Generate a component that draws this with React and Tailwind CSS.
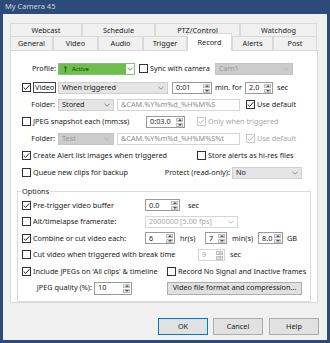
import clsx from "clsx";

function Box({ checked, disabled }) {
  return (
    <span
      className={clsx(
        "w-[9px] h-[9px] border bg-white flex items-center justify-center shrink-0",
        disabled ? "border-[#c8c8c8]" : "border-[#333333]"
      )}
    >
      {checked && (
        <svg width="7" height="7" viewBox="0 0 7 7">
          <path d="M0.7 3.5 L2.6 5.4 L6.3 1.3" fill="none" stroke={disabled ? "#b4b4b4" : "#222"} strokeWidth="1" />
        </svg>
      )}
    </span>
  );
}

function Check({ checked, disabled, label, focus, className }) {
  return (
    <div className={clsx("flex items-center", className)}>
      <Box checked={checked} disabled={disabled} />
      <span
        className={clsx(
          "ml-[2px] whitespace-nowrap",
          disabled ? "text-[#a8a8a8]" : "text-[#1a1a1a]",
          focus && "border border-[#444] px-[1px] py-[1px]"
        )}
      >
        {label}
      </span>
    </div>
  );
}

function Arrow({ light }) {
  return (
    <svg width="6" height="4" viewBox="0 0 6 4" className="shrink-0">
      <path d="M0.5 0.8 L3 3.2 L5.5 0.8" fill="none" stroke={light ? "#b0b0b0" : "#808080"} strokeWidth="0.9" />
    </svg>
  );
}

function Select({ className, value, variant }) {
  return (
    <div
      className={clsx(
        "h-[12px] flex items-center border pl-[3px] pr-[3px] whitespace-nowrap overflow-hidden",
        variant === "gray" && "bg-[#e5e5e5] border-[#cfcfcf] text-[#1a1a1a]",
        variant === "dis" && "bg-[#cccccc] border-[#c4c4c4] text-[#9a9a9a]",
        variant === "light" && "bg-white border-[#d6d6d6] text-[#a8a8a8]",
        className
      )}
    >
      <span className="flex-1">{value}</span>
      <Arrow light={variant !== "gray"} />
    </div>
  );
}

function Spin({ className, value, disabled }) {
  return (
    <div
      className={clsx(
        "h-[12px] flex border bg-white",
        disabled ? "border-[#d4d4d4] text-[#a8a8a8]" : "border-[#9a9a9a] text-[#1a1a1a]",
        className
      )}
    >
      <div className="flex-1 pl-[3px] flex items-center">{value}</div>
      <div className="w-[8px] flex flex-col gap-[1px] p-[1px] pl-0">
        <div className="flex-1 bg-[#e8e8e8] border border-[#c0c0c0] flex items-center justify-center">
          <svg width="4" height="2" viewBox="0 0 4 2"><path d="M0 2 L2 0 L4 2 Z" fill={disabled ? "#c0c0c0" : "#555"} /></svg>
        </div>
        <div className="flex-1 bg-[#e8e8e8] border border-[#c0c0c0] flex items-center justify-center">
          <svg width="4" height="2" viewBox="0 0 4 2"><path d="M0 0 L2 2 L4 0 Z" fill={disabled ? "#c0c0c0" : "#555"} /></svg>
        </div>
      </div>
    </div>
  );
}

function Text({ className, value }) {
  return (
    <div className={clsx("h-[12px] flex items-center border border-[#d4d4d4] bg-white pl-[3px] text-[#8c8c8c] whitespace-nowrap overflow-hidden", className)}>
      {value}
    </div>
  );
}

function Tab({ label, className, active }) {
  return (
    <div
      className={clsx(
        "flex items-center justify-center border-t border-l border-r border-[#d9d9d9] shrink-0",
        active ? "bg-white h-[18px] -mt-[3px] relative z-10 -mb-[1px]" : "bg-[#f0f0f0] h-[14px]",
        className
      )}
    >
      {label}
    </div>
  );
}

export default function App() {
  return (
    <div className="w-[330px] h-[343px] bg-[#2d4b78] flex flex-col text-[7.3px] leading-none text-[#1a1a1a] font-['Noto_Sans','DejaVu_Sans',sans-serif]">
      <div className="h-[14px] flex items-center pl-[5px] text-[#c9d3e2] text-[7.5px]">My Camera 45</div>
      <div className="flex-1 mx-[3px] mb-[3px] bg-[#f0f0f0] pl-[7px] pt-[9px] flex flex-col">
        <div className="flex h-[13px]">
          <Tab label="Webcast" className="w-[72px] h-[13px]" />
          <Tab label="Schedule" className="w-[73px] h-[13px]" />
          <Tab label="PTZ/Control" className="w-[85px] h-[13px]" />
          <Tab label="Watchdog" className="w-[77px] h-[13px]" />
        </div>
        <div className="flex h-[14px] items-end">
          <Tab label="General" className="w-[43px]" />
          <Tab label="Video" className="w-[45px]" />
          <Tab label="Audio" className="w-[45px]" />
          <Tab label="Trigger" className="w-[44px]" />
          <Tab label="Record" className="w-[45px]" active />
          <Tab label="Alerts" className="w-[41px]" />
          <Tab label="Post" className="w-[44px]" />
        </div>

        <div className="w-[308px] h-[253px] bg-white border border-[#d9d9d9] pt-[9px] flex flex-col">
          {/* profile */}
          <div className="h-[17px] flex items-center">
            <span className="w-[45px] text-right">Profile:</span>
            <div className="ml-[2px] w-[77px] h-[12px] flex border border-[#8fb98a] bg-white">
              <div className="w-[67px] bg-[#6cc04a] flex items-center pl-[4px] gap-[4px]">
                <svg width="5" height="8" viewBox="0 0 5 8"><path d="M2.5 0.5 L4.5 3 L3.2 3 L3.2 7.5 L1.8 7.5 L1.8 3 L0.5 3 Z" fill="#2f7d1f" /></svg>
                <span className="text-[6px] text-[#153d0c]">Active</span>
              </div>
              <div className="flex-1 flex items-center justify-center"><Arrow /></div>
            </div>
            <Check label="Sync with camera" className="ml-[4px] w-[76px]" />
            <Select variant="dis" value="Cam1" className="w-[78px]" />
          </div>
          {/* video */}
          <div className="h-[17px] flex items-center mt-[2px]">
            <Check checked focus label="Video" className="ml-[11px] w-[36px]" />
            <Select variant="gray" value="When triggered" className="w-[110px]" />
            <Spin value="0:01" className="ml-[4px] w-[40px]" />
            <span className="ml-[3px] w-[30px] whitespace-nowrap">min. for</span>
            <Spin value="2.0" className="w-[28px]" />
            <span className="ml-[4px]">sec</span>
          </div>
          {/* folder */}
          <div className="h-[17px] flex items-center">
            <span className="w-[44px] text-right">Folder:</span>
            <Select variant="gray" value="Stored" className="ml-[3px] w-[56px]" />
            <Text value="&CAM.%Y%m%d_%H%M%S" className="ml-[3px] w-[123px]" />
            <Check checked label="Use default" className="ml-[6px]" />
          </div>
          {/* jpeg */}
          <div className="h-[17px] flex items-center">
            <Check label="JPEG snapshot each (mm:ss)" className="ml-[11px] w-[124px]" />
            <Spin value="0:03.0" className="w-[39px]" />
            <Check checked disabled label="Only when triggered" className="ml-[12px]" />
          </div>
          {/* folder 2 */}
          <div className="h-[17px] flex items-center">
            <span className="w-[44px] text-right">Folder:</span>
            <Select variant="dis" value="Test" className="ml-[3px] w-[56px]" />
            <Text value="&CAM.%Y%m%d_%H%M%S%t" className="ml-[3px] w-[123px]" />
            <Check checked disabled label="Use default" className="ml-[6px]" />
          </div>
          {/* alerts */}
          <div className="h-[17px] flex items-center">
            <Check checked label="Create Alert list images when triggered" className="ml-[11px] w-[175px]" />
            <Check label="Store alerts as hi-res files" />
          </div>
          {/* queue */}
          <div className="h-[17px] flex items-center">
            <Check label="Queue new clips for backup" className="ml-[11px] w-[135px]" />
            <span className="w-[73px] text-right whitespace-nowrap">Protect (read-only):</span>
            <Select variant="gray" value="No" className="ml-[2px] w-[70px]" />
          </div>

          <fieldset className="ml-[6px] mt-[5px] w-[294px] h-[116px] border border-[#dcdcdc] pl-[4px] flex flex-col">
            <legend className="px-[1px] -ml-[1px] leading-[11px]">Options</legend>
            <div className="h-[16.5px] flex items-center">
              <Check checked label="Pre-trigger video buffer" className="w-[123px]" />
              <Spin value="0.0" className="w-[35px]" />
              <span className="ml-[8px]">sec</span>
            </div>
            <div className="h-[16.5px] flex items-center">
              <Check label="Alt/timelapse framerate:" className="w-[123px]" />
              <Select variant="light" value="2000000 [5.00 fps]" className="w-[93px]" />
            </div>
            <div className="h-[16.5px] flex items-center">
              <Check checked label="Combine or cut video each:" className="w-[123px]" />
              <Spin value="6" className="w-[30px]" />
              <span className="ml-[5px] w-[25px]">hr(s)</span>
              <Spin value="7" className="w-[22px]" />
              <span className="ml-[5px] w-[26px]">min(s)</span>
              <Spin value="8.0" className="w-[25px]" />
              <span className="ml-[4px]">GB</span>
            </div>
            <div className="h-[16.5px] flex items-center">
              <Check label="Cut video when triggered with break time" className="w-[176px]" />
              <Spin disabled value="9" className="w-[27px]" />
              <span className="ml-[5px]">sec</span>
            </div>
            <div className="h-[16.5px] flex items-center">
              <Check checked label="Include JPEGs on 'All clips' & timeline" className="w-[145px]" />
              <Check label="Record No Signal and Inactive frames" />
            </div>
            <div className="h-[17px] flex items-center">
              <span className="w-[70px] text-right whitespace-nowrap">JPEG quality (%):</span>
              <Spin value="10" className="ml-[2px] w-[38px] h-[13px]" />
              <button className="ml-[35px] w-[135px] h-[13px] bg-[#e1e1e1] border border-[#adadad] flex items-center justify-center whitespace-nowrap">
                Video file format and compression...
              </button>
            </div>
          </fieldset>
        </div>

        <div className="flex mt-[15px] ml-[148px] gap-[5px]">
          <button className="w-[50px] h-[17px] bg-[#e1e1e1] border border-[#0078d7] flex items-center justify-center">OK</button>
          <button className="w-[50px] h-[17px] bg-[#e1e1e1] border border-[#adadad] flex items-center justify-center">Cancel</button>
          <button className="ml-[1px] w-[50px] h-[17px] bg-[#e1e1e1] border border-[#adadad] flex items-center justify-center">Help</button>
        </div>
      </div>
    </div>
  );
}
